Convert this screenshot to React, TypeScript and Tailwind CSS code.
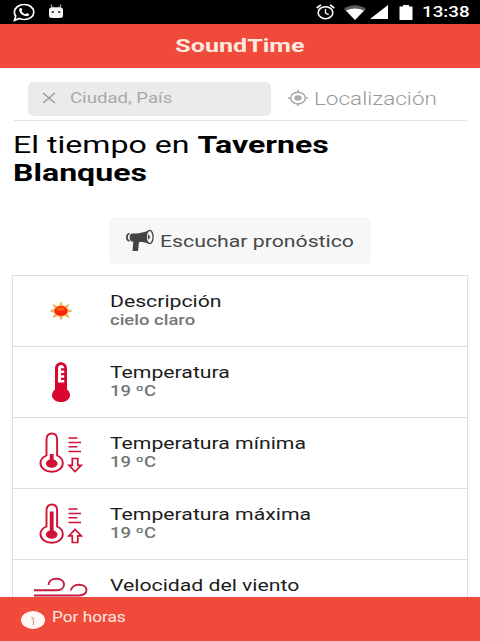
import type { ReactNode } from 'react';

const SunIcon = () => (
  <svg viewBox="0 0 24 20" className="w-6 h-5 -ml-0.5" fill="none">
    <path
      d="M12 1L13.500 4.500H10.500zM12 19L13.500 15.500H10.500zM1 10L5 8.500v3zM23 10L19 8.500v3zM3.8 3.3L8 5.200L6 7zM20.2 3.3L16 5.200L18 7zM3.8 16.7L8 14.800L6 13zM20.2 16.7L16 14.800L18 13z"
      fill="#dba544"
      stroke="#e9b45c"
      strokeWidth="0.600"
    />
    <ellipse cx="12" cy="10" rx="7.6" ry="6" fill="#fcc25c" />
    <ellipse cx="12" cy="10" rx="6.6" ry="5" fill="#f5250f" />
    <ellipse cx="11.5" cy="8" rx="4" ry="1.8" fill="#ff5a14" />
  </svg>
);

const ThermometerIcon = () => (
  <svg viewBox="0 0 20 42" className="w-5 h-[42px] -ml-0.5" fill="none">
    <path d="M4 8C4 3.5 6.5 1.2 10 1.2S16 3.5 16 8V28.5C18 30 19 31.800 19 34C19 38.300 15.200 41 10 41S1 38.300 1 34C1 31.800 2 30 4 28.500z" fill="#d9062f" />
    <path d="M7 21.500V7.500C7 5.300 8.200 4 10.200 4C12 4 13.200 5.300 13.200 7.300H10V9.500H13.200V12H10V14.200H13.200V16.700H10V19H13.200V21.500z" fill="#fff" />
  </svg>
);

const RangeIcon = ({ level, arrow }: { level: number; arrow: string }) => (
  <svg viewBox="0 0 44 42" className="w-11 h-[42px] -ml-px" fill="none" stroke="#cf1236" strokeWidth="1.900">
    <path d="M7.500 23.500V7.500C7.500 3.500 9.600 1.500 12.800 1.500S18.100 3.500 18.100 7.500V23.500C22 25.200 23.800 27.800 23.800 31C23.800 36.200 19.300 39.800 12.800 39.800S1.500 36.200 1.500 31C1.500 27.800 3.500 25.200 7.500 23.500z" />
    <path d={`M12.700 ${level}V31`} strokeWidth="3.800" />
    <ellipse cx="12.700" cy="31.500" rx="5.800" ry="4.300" fill="#cf1236" stroke="none" />
    <path d="M29.500 6H38.500M29.500 10.500H42M29.500 14.800H38.500M29.500 19.500H42" strokeWidth="1.500" />
    <path d={arrow} strokeWidth="1.700" />
  </svg>
);

const WindIcon = () => (
  <svg viewBox="0 0 56 36" className="w-14 h-9 -ml-px" fill="none" stroke="#c51b40" strokeWidth="1.900">
    <path d="M1 13.200H24C28.500 13.200 31 10.500 31 7.500C31 4 27.800 1.700 23.500 1.700C18.500 1.700 15.500 4.300 15.500 8" />
    <path d="M1 18.500H46C50.500 18.500 53.500 16 53.500 13C53.500 10 50.500 7.800 46 7.800C41.500 7.800 38.300 10.200 38 13.500" />
    <path d="M1 24H30C34 24 36 26 36 28.500S34 33 30 33S24 31.500 24 29" />
  </svg>
);

const MegaphoneIcon = () => (
  <svg viewBox="0 0 30 23" className="w-[30px] h-[23px] ml-4" fill="none">
    <path d="M6.500 4.500C12 4.800 18 3.800 24.500 1.200V14.800C20 13.200 17 12.800 14 13L13 22H7.500L8.300 12.800L6.500 12.500C4 11 4 6 6.500 4.500z" fill="#444" />
    <ellipse cx="24.700" cy="8" rx="3.400" ry="6.600" fill="#f7f7f7" stroke="#444" strokeWidth="1.300" />
    <path d="M23 5.500C25.500 6.500 25.500 9.500 23 10.500z" fill="#444" />
    <path d="M4.500 4.500C1 5.500 1 11 4.500 12" stroke="#444" strokeWidth="1.700" />
  </svg>
);

const rows: { title: string; value?: string; icon: ReactNode }[] = [
  { title: 'Descripción', value: 'cielo claro', icon: <SunIcon /> },
  { title: 'Temperatura', value: '19 ºC', icon: <ThermometerIcon /> },
  {
    title: 'Temperatura mínima',
    value: '19 ºC',
    icon: <RangeIcon level={22} arrow="M33.300 26.500H38.800V33.300H42.300L36 39.500L30 33.300H33.300z" />,
  },
  {
    title: 'Temperatura máxima',
    value: '19 ºC',
    icon: <RangeIcon level={8.500} arrow="M33.300 39.500H38.800V32.800H42.300L36 26.500L30 32.800H33.300z" />,
  },
  { title: 'Velocidad del viento', icon: <WindIcon /> },
];

const StatusBar = () => (
  <div className="h-6 shrink-0 bg-black flex items-center text-white">
    <svg viewBox="0 0 22 19" className="w-[22px] h-[19px] ml-[13px]" fill="none">
      <path d="M1.500 17.300L2.700 13C1.800 11.800 1.400 10.600 1.400 9.200C1.400 5 5.700 1.500 11.200 1.500S20.800 5 20.800 9.200S16.500 16.500 11.200 16.500C9.400 16.500 7.700 16.100 6.400 15.500z" stroke="#fff" strokeWidth="1.700" />
      <path d="M6.500 5.500C7.500 4.500 8.600 4.800 9 5.800C9.300 6.800 9.200 7.300 8.500 8C9.300 9.500 10.800 10.600 12.600 11.200C13.400 10.200 14.200 10.100 15.300 10.700C16.400 11.200 16.300 11.600 15.900 12.300C14.900 13.600 12.900 13.700 10.300 12.300C7.300 10.700 5.400 7.900 6.500 5.500z" fill="#fff" />
    </svg>
    <svg viewBox="0 0 16 15" className="w-4 h-[15px] ml-[13px] mb-0.5" fill="none">
      <path d="M3 0.500L4.300 4M13 0.500L11.700 4" stroke="#bbb" strokeWidth="1.100" />
      <path d="M1 6C1 4.300 2.300 3.300 4.300 3.300H11.700C13.700 3.300 15 4.300 15 6V11.500C15 13.300 13.500 14 12 14H4C2.500 14 1 13.300 1 11.500z" fill="#f7f7f7" />
      <ellipse cx="4.800" cy="8" rx="1.300" ry="1" fill="#333" />
      <ellipse cx="11.200" cy="8" rx="1.300" ry="1" fill="#333" />
    </svg>
    <svg viewBox="0 0 19 16" className="w-[19px] h-4 ml-auto" fill="none" stroke="#fff">
      <ellipse cx="9.500" cy="8.700" rx="7.300" ry="6" strokeWidth="1.600" />
      <path d="M9.500 5V9L12.700 10.800" strokeWidth="1.300" />
      <path d="M0.700 4L5 0.900M18.300 4L14 0.900" strokeWidth="1.700" />
    </svg>
    <svg viewBox="0 0 22 15" className="w-[22px] h-[15px] ml-[9px]">
      <path d="M0 4C6 -1 16 -1 22 4L11 15z" fill="#5c5c5c" />
      <path d="M2 5.500C8 2.800 14 2.800 20 5.500L11 15z" fill="#fff" />
    </svg>
    <svg viewBox="0 0 18 14" className="w-[18px] h-3.5 ml-1">
      <path d="M18 0V14H0z" fill="#fff" />
    </svg>
    <svg viewBox="0 0 14 15" className="w-3.5 h-[15px] ml-[11px]">
      <path d="M4 0H10V1.500H13.500V15H0.500V1.500H4z" fill="#fff" />
    </svg>
    <div className="w-[67px] pl-[9px]">
      <span className="block w-fit origin-left scale-x-[1.25] text-[15px] leading-6 font-medium whitespace-nowrap">13:38</span>
    </div>
  </div>
);

const SearchBar = () => (
  <div className="h-[53px] shrink-0 ml-3.5 mr-[13px] pl-3.5 flex items-start pt-3.5 border-b border-[#e4e4e4]">
    <div className="w-[243px] h-[34px] rounded-[5px] bg-[#ebebeb] flex items-center">
      <svg viewBox="0 0 14 12" className="w-3.5 h-3 ml-3.5 mb-0.5" stroke="#999" strokeWidth="1.500">
        <path d="M1 1L13 11M13 1L1 11" />
      </svg>
      <span className="ml-3.5 mb-px origin-left scale-x-[1.33] text-[14px] whitespace-nowrap text-[#a9a9a9]">Ciudad, País</span>
    </div>
    <div className="h-8 ml-[17px] flex items-center">
      <svg viewBox="0 0 20 16" className="w-5 h-4" fill="none" stroke="#aaa">
        <ellipse cx="10" cy="8" rx="7.300" ry="5.800" strokeWidth="1.500" />
        <ellipse cx="10" cy="8" rx="3.600" ry="2.800" fill="#aaa" stroke="none" />
        <path d="M10 0V2.500M10 13.500V16M0 8H3M17 8H20" strokeWidth="1.700" />
      </svg>
      <span className="ml-1.5 origin-left scale-x-[1.25] text-[18px] font-light whitespace-nowrap text-[#999]">Localización</span>
    </div>
  </div>
);

const App = () => {
  return (
    <div className="h-[641px] w-[480px] flex flex-col overflow-hidden bg-white font-['Roboto',sans-serif]">
      <StatusBar />
      <header className="h-11 shrink-0 bg-[#f04a3a] flex items-center justify-center">
        <h1 className="scale-x-[1.32] text-[19px] leading-6 pb-px font-bold text-[#ffe9e0]">SoundTime</h1>
      </header>
      <SearchBar />

      <main className="flex-1 min-h-0 overflow-hidden flex flex-col">
        <h2 className="ml-[13px] mt-[11px] w-fit origin-left scale-x-[1.395] text-[23px] leading-7 whitespace-nowrap text-black shrink-0">
          El tiempo en <b className="font-bold">Tavernes</b>
          <br />
          <b className="font-bold">Blanques</b>
        </h2>

        <div className="mt-[29px] ml-[109px] w-[262px] h-[47px] shrink-0 rounded-[5px] bg-[#f7f7f7] flex items-center">
          <MegaphoneIcon />
          <span className="ml-[5px] mt-0.5 origin-left scale-x-[1.25] text-[17px] whitespace-nowrap text-[#474747]">Escuchar pronóstico</span>
        </div>

        <ul className="mt-[11px] ml-3 w-[456px] shrink-0 border border-[#dedede]">
          {rows.map((row) => (
            <li key={row.title} className="h-[71px] flex border-b border-[#dedede]">
              <div className="w-[97px] flex items-center justify-center">{row.icon}</div>
              <div className="pt-4">
                <p className="w-fit origin-left scale-x-[1.325] text-[16px] leading-5 whitespace-nowrap text-[#1c1c1c]">{row.title}</p>
                {row.value && (
                  <p className="-mt-px w-fit origin-left scale-x-[1.32] text-[14px] leading-[18px] font-medium whitespace-nowrap text-[#757575]">
                    {row.value}
                  </p>
                )}
              </div>
            </li>
          ))}
        </ul>
      </main>

      <footer className="h-11 shrink-0 bg-[#f04a3a] flex items-center">
        <svg viewBox="0 0 24 18" className="w-6 h-[18px] ml-[21px] mt-0.5">
          <ellipse cx="12" cy="9" rx="12" ry="9" fill="#fff7f4" />
          <path d="M10.500 6L12.500 8V14" fill="none" stroke="#d79b92" strokeWidth="1.200" />
        </svg>
        <span className="ml-[7px] mb-[3px] origin-left scale-x-[1.23] text-[14px] whitespace-nowrap text-[#ffe9e0]">Por horas</span>
      </footer>
    </div>
  );
};

export default App;
